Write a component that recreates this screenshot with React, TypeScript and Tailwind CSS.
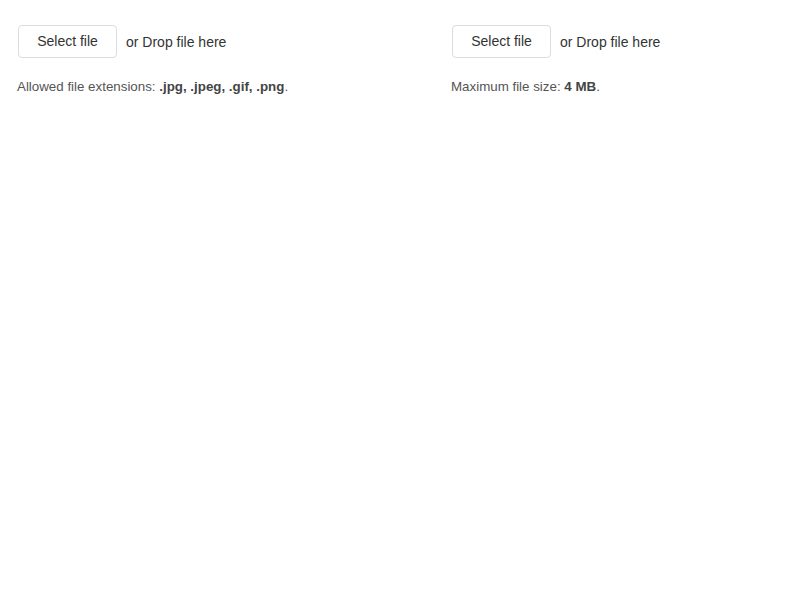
export default function App() {
  const font = { fontFamily: '"Liberation Sans", Arial, sans-serif' };
  return (
    <div className="min-h-[600px] bg-white pt-[25px] pl-[17px]" style={font}>
      <div className="grid grid-cols-[434px_1fr]">
        <div>
          <div className="flex items-center pl-px">
            <button className="h-[33px] w-[99px] rounded-[4px] border border-[#dcdcdc] bg-white text-[14px] text-[#333] leading-none pb-[2px]">
              Select file
            </button>
            <span className="ml-[9px] pt-[2px] text-[14px] text-[#333]">or Drop file here</span>
          </div>
          <p className="mt-[19px] text-[13.33px] text-[#555]">
            Allowed file extensions: <b className="font-bold text-[#444]">.jpg, .jpeg, .gif, .png</b>.
          </p>
        </div>
        <div>
          <div className="flex items-center pl-px">
            <button className="h-[33px] w-[99px] rounded-[4px] border border-[#dcdcdc] bg-white text-[14px] text-[#333] leading-none pb-[2px]">
              Select file
            </button>
            <span className="ml-[9px] pt-[2px] text-[14px] text-[#333]">or Drop file here</span>
          </div>
          <p className="mt-[19px] text-[13.33px] text-[#555]">
            Maximum file size: <b className="font-bold text-[#444]">4 MB</b>.
          </p>
        </div>
      </div>
    </div>
  );
}
